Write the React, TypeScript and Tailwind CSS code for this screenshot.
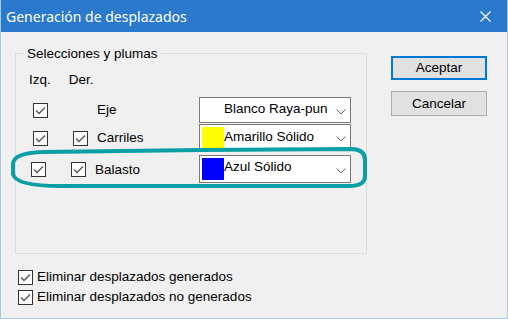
import React from 'react';

const Check: React.FC<{ className?: string }> = ({ className = '' }) => (
  <div className={`w-[15px] h-[15px] border border-[#333] bg-white flex items-center justify-center shrink-0 ${className}`}>
    <svg width="11" height="9" viewBox="0 0 11 9">
      <polyline points="1,4.5 4,7.5 10,1.5" fill="none" stroke="#555" strokeWidth="1.3" />
    </svg>
  </div>
);

const Combo: React.FC<{ label: string; swatch?: string; className?: string; textClass?: string }> = ({
  label,
  swatch,
  className = '',
  textClass = '',
}) => (
  <div className={`w-[152px] h-[26px] border border-[#7a7a7a] bg-white flex items-center pl-[2px] pr-[4px] shrink-0 ${className}`}>
    <div className={`w-[22px] h-[21px] shrink-0 ${swatch ?? 'bg-white'}`} />
    <span className={`flex-1 overflow-hidden whitespace-nowrap text-black ${textClass}`}>{label}</span>
    <svg width="10" height="6" viewBox="0 0 10 6" className="shrink-0 mt-[4px]">
      <polyline points="0.5,0.5 5,5 9.5,0.5" fill="none" stroke="#666" strokeWidth="1" />
    </svg>
  </div>
);

export default function App() {
  return (
    <div
      className="relative w-[508px] h-[319px] bg-[#f0f0f0] border-x border-b border-[#a9c9ec] overflow-hidden text-[13.5px] text-black"
      style={{ fontFamily: '"Liberation Sans", Arial, sans-serif' }}
    >
      {/* Title bar */}
      <div className="h-[32px] bg-[#2b79cc] flex items-center justify-between pl-[5px] pr-[16px]">
        <span className="text-white text-[14px]" style={{ fontFamily: '"Noto Sans", sans-serif' }}>
          Generación de desplazados
        </span>
        <svg width="11" height="11" viewBox="0 0 11 11">
          <path d="M0.5 0.5 L10.5 10.5 M10.5 0.5 L0.5 10.5" stroke="white" strokeWidth="1.1" />
        </svg>
      </div>

      <div className="flex">
        {/* Left column */}
        <div className="flex flex-col">
          <fieldset className="ml-[14px] mt-[14px] w-[352px] h-[208px] border border-[#dcdcdc] px-0">
            <legend className="ml-[8px] px-[3px] leading-[15px]">Selecciones y plumas</legend>
            <div className="flex gap-[18px] ml-[13px] mt-[11px] leading-[15px]">
              <span>Izq.</span>
              <span>Der.</span>
            </div>

            {/* Row 1 */}
            <div className="flex items-center mt-[10px] h-[25px] pl-[17px]">
              <div className="w-[40px]">
                <Check className="mt-[2px]" />
              </div>
              <div className="w-[24px]" />
              <span className="w-[102px] mt-[2px]">Eje</span>
              <Combo label="Blanco Raya-pun" />
            </div>

            {/* Row 2 */}
            <div className="flex items-center mt-[2px] h-[26px] pl-[17px]">
              <div className="w-[40px]">
                <Check className="mt-[2px]" />
              </div>
              <div className="w-[24px]">
                <Check className="mt-[2px]" />
              </div>
              <span className="w-[102px] mt-[2px]">Carriles</span>
              <Combo label="Amarillo Sólido" swatch="bg-[#ffff00]" />
            </div>

            {/* Row 3 */}
            <div className="flex items-center mt-[5px] h-[28px] pl-[15px]">
              <div className="w-[40px]">
                <Check />
              </div>
              <div className="w-[24px]">
                <Check />
              </div>
              <span className="w-[104px] mt-[2px]">Balasto</span>
              <Combo label="Azul Sólido" swatch="bg-[#0000ff] h-[22px]" className="h-[28px]" textClass="mb-[4px]" />
            </div>
          </fieldset>

          <div className="flex flex-col ml-[17px] mt-[13px]">
            <div className="flex items-center gap-[4px]">
              <Check />
              <span>Eliminar desplazados generados</span>
            </div>
            <div className="flex items-center gap-[4px]">
              <Check />
              <span>Eliminar desplazados no generados</span>
            </div>
          </div>
        </div>

        {/* Right column */}
        <div className="flex flex-col gap-[11px] ml-[24px] mt-[24px]">
          <button className="w-[96px] h-[24px] border-2 border-[#0078d7] bg-[#e1e1e1] text-black leading-none">
            Aceptar
          </button>
          <button className="w-[96px] h-[25px] border border-[#adadad] bg-[#e1e1e1] text-black leading-none">
            Cancelar
          </button>
        </div>
      </div>

      {/* Hand-drawn teal highlight around the Balasto row */}
      <svg className="absolute left-0 top-0 pointer-events-none" width="508" height="319" viewBox="0 0 508 319">
        <path
          d="M42 152 L200 150 L352 149 Q364 150 364 160 L364 176 Q364 186 348 186 L120 186 L60 186 Q14 186 12 174 L12 164 Q12 153 42 152 Z"
          fill="none"
          stroke="#0a9ea5"
          strokeWidth="4"
        />
      </svg>
    </div>
  );
}
